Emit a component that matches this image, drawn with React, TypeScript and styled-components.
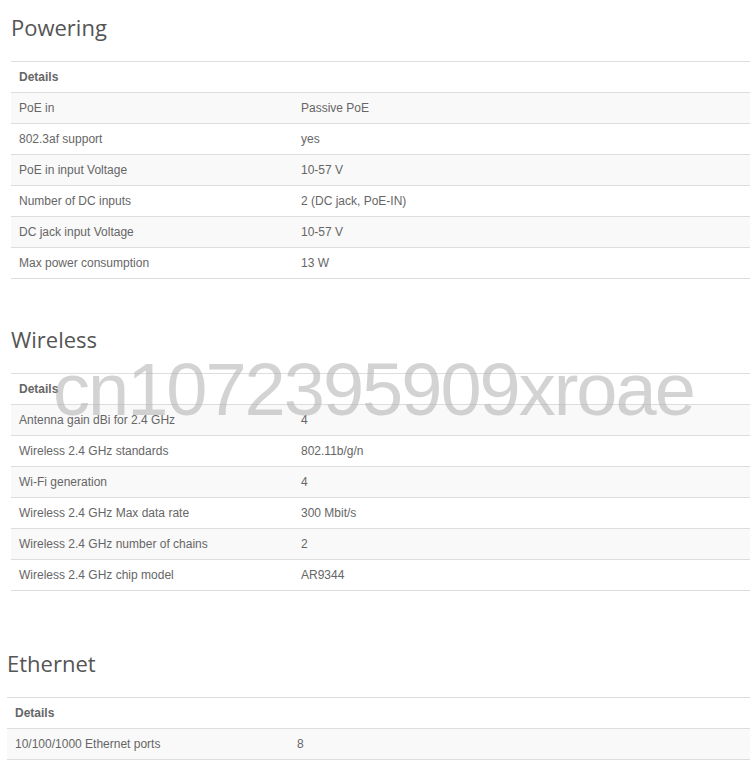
import React from "react";
import styled, { createGlobalStyle } from "styled-components";

const Global = createGlobalStyle`
  html, body { margin: 0; padding: 0; background: #fff; }
  body { font-family: "Liberation Sans", Arial, sans-serif; }
`;

const Page = styled.div`
  width: 750px;
  overflow: hidden;
  display: flex;
  flex-direction: column;
`;

const Section = styled.section<{ $indent: number; $top: number }>`
  padding-left: ${(p) => p.$indent}px;
  margin-top: ${(p) => p.$top}px;
`;

const Heading = styled.h2`
  margin: 0 0 19px 0;
  font-family: "Open Sans", "Liberation Sans", sans-serif;
  font-weight: 400;
  font-size: 22px;
  line-height: 30px;
  color: #555;
`;

const Table = styled.div`
  position: relative;
  border-bottom: 1px solid #ddd;
`;

const Row = styled.div<{ $striped?: boolean }>`
  display: grid;
  grid-template-columns: 282px 1fr;
  border-top: 1px solid #ddd;
  background: ${(p) => (p.$striped ? "#f9f9f9" : "transparent")};
  height: 30px;
`;

const Cell = styled.div<{ $bold?: boolean }>`
  padding: 7px 8px;
  font-size: 12px;
  line-height: 16px;
  color: #666;
  font-weight: ${(p) => (p.$bold ? 700 : 400)};
  white-space: nowrap;
`;

const Watermark = styled.div`
  position: absolute;
  left: 42px;
  top: -20px;
  font-family: "Liberation Sans", Arial, sans-serif;
  font-size: 74px;
  line-height: 74px;
  letter-spacing: -2px;
  color: rgba(175, 175, 175, 0.55);
  white-space: nowrap;
  pointer-events: none;
`;

type Spec = [string, string];

const SpecTable: React.FC<{ rows: Spec[]; children?: React.ReactNode }> = ({ rows, children }) => (
  <Table>
    <Row>
      <Cell $bold>Details</Cell>
      <Cell />
    </Row>
    {rows.map(([k, v], i) => (
      <Row key={k} $striped={i % 2 === 0}>
        <Cell>{k}</Cell>
        <Cell>{v}</Cell>
      </Row>
    ))}
    {children}
  </Table>
);

const powering: Spec[] = [
  ["PoE in", "Passive PoE"],
  ["802.3af support", "yes"],
  ["PoE in input Voltage", "10-57 V"],
  ["Number of DC inputs", "2 (DC jack, PoE-IN)"],
  ["DC jack input Voltage", "10-57 V"],
  ["Max power consumption", "13 W"],
];

const wireless: Spec[] = [
  ["Antenna gain dBi for 2.4 GHz", "4"],
  ["Wireless 2.4 GHz standards", "802.11b/g/n"],
  ["Wi-Fi generation", "4"],
  ["Wireless 2.4 GHz Max data rate", "300 Mbit/s"],
  ["Wireless 2.4 GHz number of chains", "2"],
  ["Wireless 2.4 GHz chip model", "AR9344"],
];

const ethernet: Spec[] = [["10/100/1000 Ethernet ports", "8"]];

export default function App() {
  return (
    <Page>
      <Global />
      <Section $indent={11} $top={12}>
        <Heading>Powering</Heading>
        <SpecTable rows={powering} />
      </Section>
      <Section $indent={11} $top={45}>
        <Heading>Wireless</Heading>
        <SpecTable rows={wireless}>
          <Watermark>cn1072395909xroae</Watermark>
        </SpecTable>
      </Section>
      <Section $indent={7} $top={57}>
        <Heading>Ethernet</Heading>
        <SpecTable rows={ethernet} />
      </Section>
    </Page>
  );
}
